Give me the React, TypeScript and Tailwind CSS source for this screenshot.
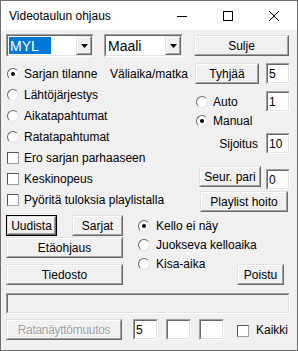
import React from "react";

/* Videotaulun ohjaus — classic Win32 style dialog */

type BoxProps = {
  children?: React.ReactNode;
  className?: string;
};

// raised 3D edge (button face)
function Btn({
  children,
  className = "",
  def = false,
  disabled = false,
}: BoxProps & { def?: boolean; disabled?: boolean }) {
  return (
    <div className={`flex shrink-0 ${def ? "border border-black" : ""} ${className}`}>
      <div className="flex-1 flex border border-t-[#e3e3e3] border-l-[#e3e3e3] border-r-[#696969] border-b-[#696969]">
        <div
          className={`flex-1 flex items-center justify-center whitespace-nowrap border border-t-white border-l-white border-r-[#a0a0a0] border-b-[#a0a0a0] bg-[#f0f0f0] ${
            disabled ? "text-[#a0a0a0] [text-shadow:1px_1px_0_#fff]" : "text-black"
          }`}
        >
          {children}
        </div>
      </div>
    </div>
  );
}

// sunken 3D edge (edit / combo)
function Sunken({ children, className = "", bg = "bg-white" }: BoxProps & { bg?: string }) {
  return (
    <div className={`flex shrink-0 border border-t-[#a0a0a0] border-l-[#a0a0a0] border-r-white border-b-white ${className}`}>
      <div className={`flex-1 min-w-0 flex items-center border border-t-[#696969] border-l-[#696969] border-r-[#e3e3e3] border-b-[#e3e3e3] ${bg}`}>
        {children}
      </div>
    </div>
  );
}

function TextBox({ value = "", className = "" }: { value?: string; className?: string }) {
  return (
    <Sunken className={`h-[21px] ${className}`}>
      <span className="pl-[1px]">{value}</span>
    </Sunken>
  );
}

function Combo({ value, selected = false, className = "" }: { value: string; selected?: boolean; className?: string }) {
  return (
    <Sunken className={className}>
      <div className="flex-1 h-full flex items-center pl-[1px] text-[14px]">
        {selected ? (
          <span className="h-[17px] w-[42px] flex items-center pl-[1px] bg-[#0078d7] text-white">{value}</span>
        ) : (
          <span className="pl-[1px]">{value}</span>
        )}
      </div>
      <div className="w-[16px] h-full flex border border-t-[#e3e3e3] border-l-[#e3e3e3] border-r-[#696969] border-b-[#696969]">
        <div className="flex-1 flex items-center justify-center border border-t-white border-l-white border-r-[#a0a0a0] border-b-[#a0a0a0] bg-[#f0f0f0]">
          <svg width="7" height="4" viewBox="0 0 7 4">
            <polygon points="0,0 7,0 3.5,4" fill="#000" />
          </svg>
        </div>
      </div>
    </Sunken>
  );
}

function Radio({ checked = false }: { checked?: boolean }) {
  return (
    <span className="w-[12px] h-[12px] shrink-0 rounded-full bg-white border border-t-[#696969] border-l-[#696969] border-r-[#e3e3e3] border-b-[#e3e3e3] flex items-center justify-center">
      {checked && <span className="w-[4px] h-[4px] rounded-full bg-black" />}
    </span>
  );
}

function Check() {
  return (
    <span className="w-[12px] h-[12px] shrink-0 bg-white border border-t-[#555555] border-l-[#555555] border-r-[#a0a0a0] border-b-[#a0a0a0]" />
  );
}

function Option({ label, radio = false, checked = false }: { label: string; radio?: boolean; checked?: boolean }) {
  return (
    <div className="h-[21px] flex items-center gap-[5px] pl-[1px] whitespace-nowrap">
      {radio ? <Radio checked={checked} /> : <Check />}
      <span>{label}</span>
    </div>
  );
}

export default function App() {
  return (
    <div className="w-[298px] h-[351px] flex flex-col bg-[#f0f0f0] border border-[#6e6e6e] text-[12px] leading-none text-black font-['Liberation_Sans',Arial,sans-serif] overflow-hidden select-none">
      {/* title bar */}
      <div className="h-[29px] shrink-0 bg-white flex items-center">
        <span className="flex-1 pl-[8px]">Videotaulun ohjaus</span>
        <div className="w-[46px] h-full flex items-center justify-center">
          <svg width="10" height="10" viewBox="0 0 10 10">
            <path d="M0 5.5h10" stroke="#000" strokeWidth="1" />
          </svg>
        </div>
        <div className="w-[46px] h-full flex items-center justify-center">
          <svg width="10" height="10" viewBox="0 0 10 10">
            <rect x="0.5" y="0.5" width="9" height="9" fill="none" stroke="#000" strokeWidth="1" />
          </svg>
        </div>
        <div className="w-[46px] h-full flex items-center justify-center">
          <svg width="10" height="10" viewBox="0 0 10 10">
            <path d="M0 0L10 10M10 0L0 10" stroke="#000" strokeWidth="1" />
          </svg>
        </div>
      </div>

      <div className="flex flex-col pl-[5px] pr-[7px]">
        {/* top row */}
        <div className="flex items-start mt-[4px] h-[23px]">
          <Combo className="w-[88px] h-[23px]" value="MYL" selected />
          <Combo className="w-[79px] h-[23px] ml-[10px]" value="Maali" />
          <Btn className="w-[95px] h-[21px] ml-[11px] mt-[1px]">Sulje</Btn>
        </div>

        {/* options */}
        <div className="flex mt-[6px]">
          <div className="w-[104px] shrink-0 flex flex-col">
            <Option radio checked label="Sarjan tilanne" />
            <Option radio label="Lähtöjärjestys" />
            <Option radio label="Aikatapahtumat" />
            <Option radio label="Ratatapahtumat" />
            <Option label="Ero sarjan parhaaseen" />
            <Option label="Keskinopeus" />
            <Option label="Pyöritä tuloksia playlistalla" />
          </div>

          <div className="flex-1 flex flex-col">
            <div className="h-[21px] flex items-center">
              <span className="flex-1 whitespace-nowrap">Väliaika/matka</span>
              <Btn className="w-[64px] h-[21px]">Tyhjää</Btn>
              <TextBox className="w-[24px] ml-[7px]" value="5" />
            </div>
            <div className="h-[21px] mt-[7px] flex items-center pl-[86px]">
              <Radio />
              <span className="ml-[5px]">Auto</span>
              <TextBox className="w-[24px] ml-auto" value="1" />
            </div>
            <div className="h-[18px] flex items-center pl-[86px]">
              <Radio checked />
              <span className="ml-[5px]">Manual</span>
            </div>
            <div className="h-[21px] mt-[3px] flex items-center justify-end">
              <span>Sijoitus</span>
              <TextBox className="w-[24px] ml-[8px]" value="10" />
            </div>
            <div className="mt-[12px] flex items-start justify-end">
              <Btn className="w-[62px] h-[21px]">Seur. pari</Btn>
              <TextBox className="w-[24px] ml-[5px] mt-[3px]" value="0" />
            </div>
            <Btn className="w-[88px] h-[21px] mt-[1px] mr-[2px] self-end">Playlist hoito</Btn>
          </div>
        </div>

        {/* buttons + clock */}
        <div className="flex mt-[3px] h-[70px]">
          <div className="w-[117px] shrink-0 flex flex-col">
            <div className="flex justify-between">
              <Btn def className="w-[51px] h-[21px]">Uudista</Btn>
              <Btn className="w-[51px] h-[21px]">Sarjat</Btn>
            </div>
            <Btn className="h-[21px] mt-[1px]">Etäohjaus</Btn>
            <Btn className="h-[21px] mt-[6px]">Tiedosto</Btn>
          </div>
          <div className="w-[90px] shrink-0 ml-[15px] pt-[1px] flex flex-col">
            {["Kello ei näy", "Juokseva kelloaika", "Kisa-aika"].map((t, i) => (
              <div key={t} className="h-[19px] flex items-center gap-[6px] whitespace-nowrap">
                <Radio checked={i === 0} />
                <span>{t}</span>
              </div>
            ))}
          </div>
          <Btn className="w-[47px] h-[21px] ml-auto mr-[6px] self-end">Poistu</Btn>
        </div>

        {/* status line */}
        <Sunken className="h-[21px] mt-[8px]" bg="bg-[#f0f0f0]" />

        {/* bottom row */}
        <div className="flex items-center mt-[5px] h-[21px]">
          <Btn disabled className="w-[116px] h-[21px]">
            <span className="tracking-[-0.3px]">Ratanäyttömuutos</span>
          </Btn>
          <TextBox className="w-[25px] ml-[11px]" value="5" />
          <TextBox className="w-[25px] ml-[8px]" />
          <TextBox className="w-[25px] ml-[8px]" />
          <span className="ml-[13px] mt-[2px] flex">
            <Check />
          </span>
          <span className="ml-[7px]">Kaikki</span>
        </div>
      </div>
    </div>
  );
}
